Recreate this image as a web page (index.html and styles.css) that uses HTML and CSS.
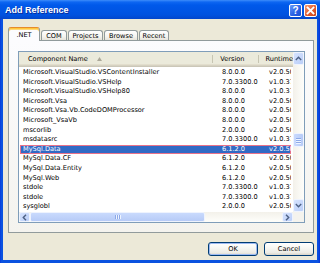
FILE: index.html
```html
<!DOCTYPE html>
<html>
<head>
<meta charset="utf-8">
<title>Add Reference</title>
<link rel="stylesheet" href="styles.css">
</head>
<body>
<div class="window">
  <div class="titlebar">
    <span class="title">Add Reference</span>
    <div class="tbtns">
      <span class="tbtn help">?</span>
      <span class="tbtn close"><svg width="9" height="9" viewBox="0 0 9 9"><path d="M1.5 1.5 L7.5 7.5 M7.5 1.5 L1.5 7.5" stroke="#fff" stroke-width="1.8" stroke-linecap="square"/></svg></span>
    </div>
  </div>
  <div class="client">
    <div class="tabs">
      <div class="tab active t-net">.NET</div>
      <div class="tab t-com">COM</div>
      <div class="tab t-proj">Projects</div>
      <div class="tab t-browse">Browse</div>
      <div class="tab t-recent">Recent</div>
    </div>
    <div class="panel">
      <div class="listview">
        <div class="lv-main">
          <div class="header">
            <div class="hcell h1">Component Name<span class="sort"><svg width="5" height="4" viewBox="0 0 5 4"><path d="M2.5 0 L5 4 L0 4 Z" fill="#ACA899"/></svg></span></div>
            <div class="hcell h2">Version</div>
            <div class="hcell h3">Runtime</div>
          </div>
          <div class="rows">
            <div class="row"><span class="c1">Microsoft.VisualStudio.VSContentInstaller</span><span class="c2">8.0.0.0</span><span class="c3">v2.0.50727</span></div>
            <div class="row"><span class="c1">Microsoft.VisualStudio.VSHelp</span><span class="c2">7.0.3300.0</span><span class="c3">v1.0.3705</span></div>
            <div class="row"><span class="c1">Microsoft.VisualStudio.VSHelp80</span><span class="c2">8.0.0.0</span><span class="c3">v1.0.3705</span></div>
            <div class="row"><span class="c1">Microsoft.Vsa</span><span class="c2">8.0.0.0</span><span class="c3">v2.0.50727</span></div>
            <div class="row"><span class="c1">Microsoft.Vsa.Vb.CodeDOMProcessor</span><span class="c2">8.0.0.0</span><span class="c3">v2.0.50727</span></div>
            <div class="row"><span class="c1">Microsoft_VsaVb</span><span class="c2">8.0.0.0</span><span class="c3">v2.0.50727</span></div>
            <div class="row"><span class="c1">mscorlib</span><span class="c2">2.0.0.0</span><span class="c3">v2.0.50727</span></div>
            <div class="row"><span class="c1">msdatasrc</span><span class="c2">7.0.3300.0</span><span class="c3">v1.0.3705</span></div>
            <div class="row selected"><span class="c1">MySql.Data</span><span class="c2">6.1.2.0</span><span class="c3">v2.0.50727</span></div>
            <div class="row"><span class="c1">MySql.Data.CF</span><span class="c2">6.1.2.0</span><span class="c3">v2.0.50727</span></div>
            <div class="row"><span class="c1">MySql.Data.Entity</span><span class="c2">6.1.2.0</span><span class="c3">v2.0.50727</span></div>
            <div class="row"><span class="c1">MySql.Web</span><span class="c2">6.1.2.0</span><span class="c3">v2.0.50727</span></div>
            <div class="row"><span class="c1">stdole</span><span class="c2">7.0.3300.0</span><span class="c3">v1.0.3705</span></div>
            <div class="row"><span class="c1">stdole</span><span class="c2">7.0.3300.0</span><span class="c3">v1.0.3705</span></div>
            <div class="row"><span class="c1">sysglobl</span><span class="c2">2.0.0.0</span><span class="c3">v2.0.50727</span></div>
          </div>
        </div>
        <div class="vscroll">
          <div class="sbtn"><svg width="7" height="5" viewBox="0 0 7 5"><path d="M0.8 4 L3.5 1.3 L6.2 4" fill="none" stroke="#4D6185" stroke-width="1.4"/></svg></div>
          <div class="vtrack"><div class="vthumb"><span class="grip-h"></span><span class="grip-h"></span><span class="grip-h"></span></div></div>
          <div class="sbtn"><svg width="7" height="5" viewBox="0 0 7 5"><path d="M0.8 1 L3.5 3.7 L6.2 1" fill="none" stroke="#4D6185" stroke-width="1.4"/></svg></div>
        </div>
        <div class="hscroll">
          <div class="sbtn"><svg width="5" height="7" viewBox="0 0 5 7"><path d="M4 0.8 L1.3 3.5 L4 6.2" fill="none" stroke="#4D6185" stroke-width="1.4"/></svg></div>
          <div class="htrack"><div class="hthumb"><span class="grip-v"></span><span class="grip-v"></span><span class="grip-v"></span></div></div>
          <div class="sbtn"><svg width="5" height="7" viewBox="0 0 5 7"><path d="M1 0.8 L3.7 3.5 L1 6.2" fill="none" stroke="#4D6185" stroke-width="1.4"/></svg></div>
        </div>
        <div class="corner"></div>
      </div>
    </div>
    <div class="buttons">
      <button class="btn default">OK</button>
      <button class="btn">Cancel</button>
    </div>
  </div>
</div>
</body>
</html>
```

FILE: styles.css
```css
* { box-sizing: border-box; }
html, body { margin: 0; padding: 0; }
body {
  width: 320px;
  height: 263px;
  overflow: hidden;
  background: #0A4FDD;
  font-family: "DejaVu Sans", "Noto Sans", sans-serif;
  font-size: 6.6px;
  color: #000;
}
.window {
  width: 320px;
  height: 263px;
  display: flex;
  flex-direction: column;
  background: linear-gradient(90deg, #0831D9 0, #0A52E0 1px, #0A52E0 318px, #0831D9 320px);
}
.titlebar {
  height: 19px;
  flex: none;
  display: flex;
  align-items: center;
  justify-content: space-between;
  padding: 0 3px 0 5px;
  background: linear-gradient(#3D8DFA 0, #0E67F2 2px, #0059EA 5px, #0055E4 11px, #0052DF 15px, #0346CB 19px);
}
.title {
  color: #fff;
  font: bold 9px "Liberation Sans", Arial, sans-serif;
  text-shadow: 1px 1px 0 #0A2C9C;
  margin-top: 1px;
}
.tbtns { display: flex; gap: 2px; margin-top: 2px; }
.tbtn {
  width: 13px;
  height: 13px;
  border: 1px solid #fff;
  border-radius: 2px;
  display: flex;
  align-items: center;
  justify-content: center;
}
.help {
  background: linear-gradient(135deg, #6A9BFA, #2B63E6 55%, #1A4ED2);
  color: #fff;
  font: bold 10px "Liberation Sans", Arial, sans-serif;
  line-height: 11px;
}
.close {
  background: linear-gradient(135deg, #F39A74, #E35D30 55%, #C9421B);
}
.client {
  flex: 1;
  margin: 0 3px 3px 3px;
  background: #ECE9D8;
  display: flex;
  flex-direction: column;
  padding: 8px 3px 4px 5px;
}
.tabs {
  display: flex;
  align-items: flex-end;
  gap: 1px;
  height: 13px;
  flex: none;
  position: relative;
  z-index: 1;
}
.tab {
  height: 10px;
  border: 1px solid #919B9C;
  border-bottom: none;
  border-radius: 3px 3px 0 0;
  background: linear-gradient(#FFFFFF, #F5F4EF 60%, #E6E4DA);
  display: flex;
  align-items: center;
  justify-content: center;
  white-space: nowrap;
}
.tab.active {
  height: 14px;
  margin-bottom: -1px;
  background: #FCFCFE;
  border-top: 1px solid #E68B2C;
  box-shadow: inset 0 1px 0 #FFC83C, inset 0 2px 0 #FFD87A;
  padding-top: 1px;
}
.t-net { width: 32px; }
.t-com { width: 26px; }
.t-proj { width: 35px; }
.t-browse { width: 34px; }
.t-recent { width: 30px; }
.panel {
  height: 193px;
  flex: none;
  border: 1px solid #919B9C;
  background: linear-gradient(#FCFCFE, #F4F3EE);
  padding: 10px 8px 9px 9px;
}
.listview {
  height: 172px;
  border: 1px solid #7F9DB9;
  background: #fff;
  display: grid;
  grid-template-columns: 274px 11px;
  grid-template-rows: 160px 10px;
}
.lv-main { overflow: hidden; }
.header {
  height: 15px;
  display: flex;
  background: #EBEADB;
  box-shadow: inset 0 -1px 0 #CBC7B8, inset 0 -2px 0 #D6D2C2, inset 0 -3px 0 #E2DECD;
}
.hcell {
  display: flex;
  align-items: center;
  white-space: nowrap;
  padding-bottom: 1px;
  background: linear-gradient(#C7C5B2, #C7C5B2) right 3px / 1px 8px no-repeat;
}
.h1 { width: 198px; padding-left: 9px; }
.h2 { width: 47px; padding-left: 7px; }
.h3 { flex: 1; padding-left: 6px; background: none; }
.sort { margin-left: 9px; display: flex; }
.rows { padding: 1px 2px 0 1px; }
.row {
  height: 9.6px;
  display: flex;
  align-items: center;
  white-space: nowrap;
  line-height: 9.6px;
}
.row.selected {
  background: #316AC5;
  color: #fff;
  box-shadow: inset 0 0 0 1px #E8728A;
}
.c1 { width: 197px; padding-left: 3px; flex: none; }
.c2 { width: 47px; padding-left: 5px; flex: none; }
.c3 { flex: 1; padding-left: 5px; overflow: hidden; }
.vscroll {
  display: flex;
  flex-direction: column;
  background: linear-gradient(90deg, #F3F1EA, #FEFEFB);
}
.sbtn {
  flex: none;
  border: 1px solid #EEF3FE;
  border-radius: 2px;
  background: linear-gradient(135deg, #D6E3FE, #BACEF8);
  display: flex;
  align-items: center;
  justify-content: center;
}
.vscroll .sbtn { height: 13px; }
.hscroll .sbtn { width: 11px; }
.vtrack { flex: 1; padding-top: 68px; }
.vthumb {
  height: 14px;
  border: 1px solid #EEF3FE;
  border-radius: 2px;
  background: linear-gradient(90deg, #C9DAFD, #B7CBF7);
  display: flex;
  flex-direction: column;
  align-items: center;
  justify-content: center;
  gap: 1px;
}
.grip-h { width: 5px; height: 1px; background: #8DA9E8; box-shadow: 0 1px 0 #EEF4FF; }
.hscroll {
  display: flex;
  background: linear-gradient(#F3F1EA, #FEFEFB);
}
.htrack { flex: 1; display: flex; }
.hthumb {
  width: 175px;
  border: 1px solid #EEF3FE;
  border-radius: 2px;
  background: linear-gradient(#C9DAFD, #B7CBF7);
  display: flex;
  align-items: center;
  justify-content: center;
  gap: 1px;
}
.grip-v { width: 1px; height: 4px; background: #8DA9E8; box-shadow: 1px 0 0 #EEF4FF; }
.corner { background: #F4F3EE; }
.buttons {
  display: flex;
  justify-content: flex-end;
  gap: 6px;
  margin-top: 9px;
  flex: none;
}
.btn {
  width: 50px;
  height: 14px;
  padding: 0;
  border: 1px solid #003C74;
  border-radius: 3px;
  background: linear-gradient(#FFFFFF, #F6F6F2 45%, #ECEBE5 80%, #D8D3C8);
  font: 6.6px "DejaVu Sans", sans-serif;
  color: #000;
}
.btn.default {
  box-shadow: inset 0 0 0 1px #9DBAF2;
}
```
